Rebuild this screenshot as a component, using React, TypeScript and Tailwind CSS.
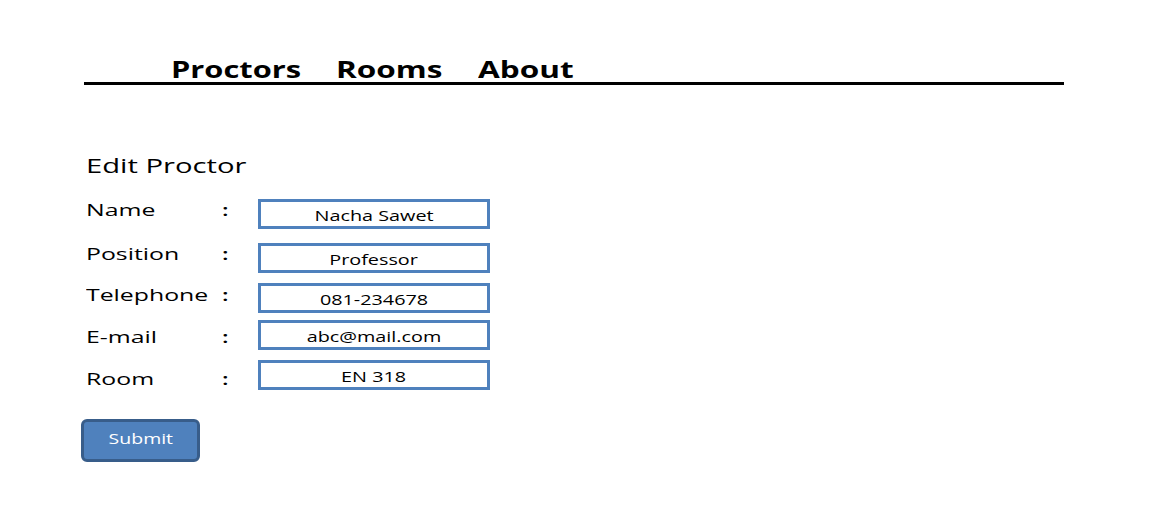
const fields = [
  { label: 'Name', value: 'Nacha Sawet', rowClass: 'mt-[0px]', labelClass: '-mt-[8px]' },
  { label: 'Position', value: 'Professor', rowClass: 'mt-[14px]', labelClass: '-mt-[9px]' },
  { label: 'Telephone', value: '081-234678', rowClass: 'mt-[10px]', labelClass: '-mt-[6px]' },
  { label: 'E-mail', value: 'abc@mail.com', rowClass: 'mt-[7px]', labelClass: 'mt-[4px]' },
  { label: 'Room', value: 'EN 318', rowClass: 'mt-[10px]', labelClass: 'mt-[8px]' },
];

const App: React.FC = () => {
  return (
    <div className="w-[1170px] h-[521px] bg-white text-black font-['Open_Sans',sans-serif] overflow-hidden">
      {/* //? Top nav - mockup text is stretched wide, hence the scale-x */}
      <div className="ml-[84px] w-[980px] pt-[57px] border-b-[3px] border-black">
        <nav className="flex pl-[87px] text-[23px] font-bold leading-[25px]">
          <a className="w-[165px] cursor-pointer">
            <span className="inline-block origin-left scale-x-[1.34]">Proctors</span>
          </a>
          <a className="w-[142px] cursor-pointer">
            <span className="inline-block origin-left scale-x-[1.37]">Rooms</span>
          </a>
          <a className="cursor-pointer">
            <span className="inline-block origin-left scale-x-[1.37]">About</span>
          </a>
        </nav>
      </div>

      {/* //? Form */}
      <div className="ml-[86px] mt-[68px]">
        <h2 className="text-[20px] leading-[26px]">
          <span className="inline-block origin-left scale-x-[1.46]">Edit Proctor</span>
        </h2>

        <div className="mt-[20px] flex flex-col">
          {fields.map((f) => (
            <div key={f.label} className={`flex items-center h-[30px] ${f.rowClass}`}>
              <div className={`flex w-[172px] text-[16px] font-medium ${f.labelClass}`}>
                <span className="w-[137px]">
                  <span className="inline-block origin-left scale-x-[1.55]">{f.label}</span>
                </span>
                <span className="inline-block scale-x-[1.5] font-semibold">:</span>
              </div>
              <div className="w-[232px] h-[30px] border-[3px] border-[#4f81bd] flex items-center justify-center text-[15px] font-medium pt-[3px]">
                <span className="inline-block scale-x-[1.32]">{f.value}</span>
              </div>
            </div>
          ))}
        </div>

        <button className="mt-[29px] -ml-[5px] w-[119px] h-[43px] rounded-[6px] bg-[#4f81bd] border-[3px] border-[#385d8a] text-white text-[15px] pb-[5px]">
          <span className="inline-block scale-x-[1.3]">Submit</span>
        </button>
      </div>
    </div>
  );
};

export default App;
